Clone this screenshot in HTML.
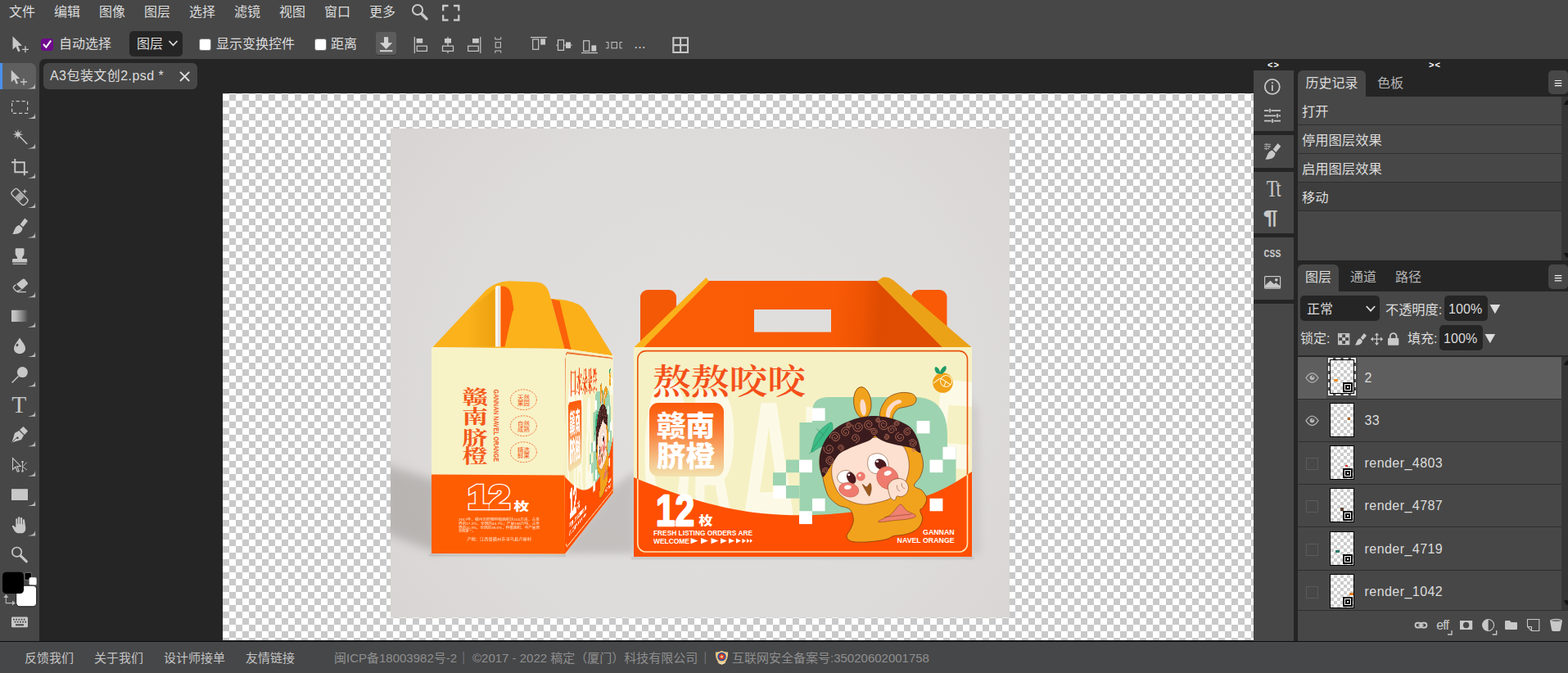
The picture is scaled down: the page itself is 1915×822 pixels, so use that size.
<!DOCTYPE html>
<html lang="zh-CN">
<head>
<meta charset="utf-8">
<title>A3包装文创2.psd</title>
<style>
html,body{margin:0;padding:0}
body{width:1915px;height:822px;overflow:hidden;background:#474747;position:relative;font-family:"Liberation Sans","Noto Sans CJK SC",sans-serif;font-size:16px;color:#dcdcdc;line-height:20px}
.a{position:absolute}
.t{position:absolute;white-space:nowrap;line-height:20px;height:20px}
svg{position:absolute;overflow:visible}
#ws{left:48px;top:72px;width:1867px;height:711px;background:#252525;border-radius:7px 0 0 0}
#canvas{left:272px;top:114px;width:1259px;height:668px;background-color:#fff;
 background-image:repeating-conic-gradient(#c9c9c9 0% 25%,#fff 0% 50%);
 background-size:16px 16px;background-position:0 1px;overflow:hidden}
.menu span{position:absolute;top:5px;line-height:20px;white-space:nowrap}
.dk{background:#252525;border-radius:5px}
.cb{position:absolute;width:15px;height:15px;border-radius:3px;background:#fff;box-sizing:border-box;border:1px solid #767676}
#footer{left:0;top:783px;width:1915px;height:39px;background:#464749;border-top:1px solid #0c0c0c;box-sizing:border-box;font-size:15px}
#footer .g{color:#8f8f8f}
#footer span{position:absolute;top:10px;line-height:20px;white-space:nowrap}
.ptab{position:absolute;height:32px;line-height:31px;background:#474747;border-radius:6px 6px 0 0;text-align:center}
.pt2{position:absolute;line-height:31px;color:#b4b4b4}
.hrow{position:absolute;left:1585px;width:322px;height:34px;background:#474747;border-bottom:1px solid #2e2e2e;line-height:37px;text-indent:5px;font-size:16.3px}
.lrow{position:absolute;left:1585px;width:322px;height:51px;background:#474747;border-bottom:1px solid #2e2e2e}
.lrow .nm{position:absolute;left:81.500px;top:16px;line-height:20px;letter-spacing:.45px;white-space:nowrap}
.th{position:absolute;left:39px;top:4px;width:30px;height:42px;box-sizing:border-box;border:1px solid #000;background-color:#fff;
 background-image:linear-gradient(45deg,#ccc 25%,transparent 25%,transparent 75%,#ccc 75%),linear-gradient(45deg,#ccc 25%,transparent 25%,transparent 75%,#ccc 75%);
 background-size:8px 8px;background-position:0 0,4px 4px}
.so{position:absolute;right:1px;bottom:1px;width:12px;height:12px;background:#000;box-sizing:border-box}
.so:before{content:"";position:absolute;left:2px;top:2px;width:8px;height:8px;border:1px solid #fff;box-sizing:border-box}
.so:after{content:"";position:absolute;left:5px;top:5px;width:2px;height:2px;background:#fff}
.mk{position:absolute;width:4px;height:3px}
.ck{position:absolute;left:10px;top:19px;width:15px;height:15px;box-sizing:border-box;border:1px solid #5a5a5a}
</style>
</head>
<body>
<!-- MENU BAR -->
<div class="a menu" style="left:0;top:0;width:1915px;height:30px">
<span style="left:11px">文件</span><span style="left:66px">编辑</span><span style="left:121px">图像</span><span style="left:176px">图层</span><span style="left:231px">选择</span><span style="left:286px">滤镜</span><span style="left:341px">视图</span><span style="left:396px">窗口</span><span style="left:451px">更多</span>
</div>
<!-- OPTIONS BAR -->
<div class="a" id="opts" style="left:0;top:30px;width:1915px;height:42px">
<div class="cb" style="left:50px;top:17px;background:#6f0a8c;border-color:#6f0a8c"></div>
<div class="t" style="left:72px;top:14px">自动选择</div>
<div class="a dk" style="left:158px;top:8px;width:65px;height:31px"></div>
<div class="t" style="left:167px;top:14px">图层</div>
<div class="cb" style="left:243px;top:17px"></div>
<div class="t" style="left:264px;top:14px">显示变换控件</div>
<div class="cb" style="left:384px;top:17px"></div>
<div class="t" style="left:404px;top:14px">距离</div>
<div class="a" style="left:459px;top:9px;width:25px;height:28px;background:#5c5c5c;border-radius:3px;box-shadow:0 1px 0 #383838"></div>
</div>
<!-- WORKSPACE -->
<div class="a" id="ws"></div>
<div class="a" style="left:53px;top:77px;width:188px;height:32px;background:#474747;border-radius:6px"></div>
<div class="t" style="left:61px;top:83px;letter-spacing:.45px">A3包装文创2.psd *</div>
<div class="a" id="canvas">
<svg id="art" width="1915" height="822" viewBox="0 0 1915 822" style="left:-272px;top:-114px">
<defs>
<radialGradient id="bg" gradientUnits="userSpaceOnUse" cx="870" cy="470" r="560"><stop offset="0" stop-color="#e2e0df"/><stop offset=".6" stop-color="#dddbd9"/><stop offset="1" stop-color="#d5d2d0"/></radialGradient>
<linearGradient id="lab" x1="0" y1="0" x2="0" y2="1"><stop offset="0" stop-color="#fc5a08"/><stop offset=".35" stop-color="#fa7a32"/><stop offset=".8" stop-color="#f5c48b"/><stop offset="1" stop-color="#f3e2ae"/></linearGradient>
<linearGradient id="back" gradientUnits="userSpaceOnUse" x1="860" y1="380" x2="1150" y2="400"><stop offset="0" stop-color="#fb5c06"/><stop offset=".55" stop-color="#f85a05"/><stop offset=".66" stop-color="#ee5403"/><stop offset=".74" stop-color="#de4b01"/><stop offset="1" stop-color="#e04c02"/></linearGradient>
<linearGradient id="rsh" gradientUnits="userSpaceOnUse" x1="570" y1="0" x2="606" y2="0"><stop offset="0" stop-color="#d98a00" stop-opacity="0"/><stop offset="1" stop-color="#d98a00" stop-opacity=".45"/></linearGradient>
<filter id="b5" x="-50%" y="-50%" width="200%" height="200%"><feGaussianBlur stdDeviation="4.5"/></filter>
<filter id="b6" x="-50%" y="-50%" width="200%" height="200%"><feGaussianBlur stdDeviation="6"/></filter>
<filter id="b8" x="-50%" y="-50%" width="200%" height="200%"><feGaussianBlur stdDeviation="9"/></filter>
<filter id="b1" x="-50%" y="-50%" width="200%" height="200%"><feGaussianBlur stdDeviation="1.2"/></filter>
<filter id="b3" x="-50%" y="-50%" width="200%" height="200%"><feGaussianBlur stdDeviation="2.5"/></filter>
<clipPath id="cimg"><rect x="477" y="157.100" width="756" height="597.200"/></clipPath>
<clipPath id="csh"><rect x="477" y="157" width="756" height="523.500"/></clipPath>
<clipPath id="cfront"><rect x="774" y="424" width="413" height="256"/></clipPath>
<clipPath id="cside"><path d="M689.6,426 L748.6,434.5 L748.6,602 L690,676.6 Z"/></clipPath>
</defs>
<g clip-path="url(#cimg)">
<rect x="477" y="157" width="757" height="598" fill="url(#bg)"/>
<!-- floor shadows -->
<g>
<path d="M536,588 L536,676 L466,650 L466,566 Z" fill="#77726f" opacity=".34" filter="url(#b6)"/>
<path d="M686,676 L748,596 L776,575 L776,676 Z" fill="#77726f" opacity=".26" filter="url(#b5)"/>
<path d="M1182,480 L1195,500 L1198,678 L1182,678 Z" fill="#8a8583" opacity=".16" filter="url(#b5)"/>
</g>
<path d="M524,677 L691,677.600 L691,679.800 L524,679 Z M771,680.500 L1189,680.500 L1189,682.800 L771,682.800 Z" fill="#6b6664" opacity=".28" filter="url(#b1)"/>
<g id="leftbox">
<path d="M528.5,424 L594,354 Q606,343.5 622,343.2 L656,344.5 Q667,346 670.5,357 L689.8,426 Z" fill="#fbb21b"/>
<path d="M565,385 L605,352 L605,423.500 L565,423.500 Z" fill="url(#rsh)"/>
<path d="M673,365 Q692,365 707,372 Q713,376 717,383 L748.6,434.5 L689.6,426 Z" fill="#fbb019"/>
<path d="M673,365 L683.500,367.500 L697.500,427.300 L689.600,426 Z" fill="#fb6209"/>
<path d="M604.800,352 Q605.200,347.600 611.500,349.600 L611.500,423.500 L605,423.500 Z" fill="#f8f4ee"/><path d="M609.300,351 V423" stroke="#c9c4be" stroke-width=".8" fill="none"/>
<path d="M611.500,349.800 Q622,348 625,362 L627.500,378 L626,381 L616.500,423.500 L611.500,423.500 Z" fill="#fb6008"/>
<path d="M527,424 L689.6,426 L690,676.6 L527,676 Z" fill="#f8f2c7"/>
<path d="M527,579.6 L689.8,580.6 L690,676.6 L527,676 Z" fill="#ff5d01"/>
<path d="M689.6,426 L748.6,434.5 L748.6,602 L690,676.6 Z" fill="#fbf6d6"/>
<g id="lfront">
<g font-family="'Noto Serif CJK SC','Noto Sans CJK SC',serif" font-weight="700" font-size="23" fill="#f4591a" text-anchor="middle" transform="translate(580,0) scale(1.380,1)">
<text x="0" y="493">赣</text><text x="0" y="517.500">南</text><text x="0" y="543">脐</text><text x="0" y="565.500">橙</text>
</g>
<text transform="translate(603.3,475.5) rotate(90)" font-family="'Liberation Sans',sans-serif" font-weight="bold" font-size="8.2" fill="#f4591a" textLength="88.500" lengthAdjust="spacingAndGlyphs">GANNAN NAVEL ORANGE</text>
<g fill="none" stroke="#f4591a" stroke-width=".8" stroke-dasharray="2.2 1.3">
<ellipse cx="639.4" cy="488.200" rx="16" ry="12.400"/><ellipse cx="639.4" cy="520.200" rx="16" ry="12.400"/><ellipse cx="639.4" cy="552.200" rx="16" ry="12.400"/>
</g>
<g font-family="'Liberation Sans','Noto Sans CJK SC',sans-serif" font-size="7.4" fill="#f4591a" text-anchor="middle">
<text x="639.4" y="487.500">天然</text><text x="639.4" y="494.800">果园</text>
<text x="639.4" y="519.500">自然</text><text x="639.4" y="526.800">成熟</text>
<text x="639.4" y="551.500">精选</text><text x="639.4" y="558.800">鲜果</text>
</g>
<g transform="translate(571.600,621.300) scale(1.120,1)" font-family="'Liberation Sans',sans-serif" font-weight="bold" font-size="41" stroke-linejoin="miter">
<text fill="#fff" stroke="#fff" stroke-width="4.600">12</text><text fill="#ff5d01" stroke="#ff5d01" stroke-width="2">12</text></g>
<text transform="translate(627.300,623.300) scale(1.350,1)" font-family="'Liberation Sans','Noto Sans CJK SC',sans-serif" font-weight="900" font-size="14" fill="#fff">枚</text>
<g font-family="'Liberation Sans','Noto Sans CJK SC',sans-serif" font-size="4.1" fill="#fff" opacity=".9">
<text x="560" y="636.200" textLength="99" lengthAdjust="spacingAndGlyphs">2017年，赣州市脐橙种植面积达155万亩，占世</text>
<text x="560" y="640.900" textLength="99" lengthAdjust="spacingAndGlyphs">界的17.2%，全国的44.7%；产量108万吨，占世</text>
<text x="560" y="645.600" textLength="99" lengthAdjust="spacingAndGlyphs">界的11.3%，全国的39.6%，种植面积、年产量居</text>
<text x="560" y="650.300">全国第一。</text>
<text x="570.400" y="660.300" textLength="78.500" lengthAdjust="spacingAndGlyphs" font-size="4.6">产地：江西省赣州市寻乌县卢屋村</text>
</g>
</g>
</g>
<g id="rightbox">
<rect x="782" y="354" width="44" height="72" rx="9" fill="#f45906"/>
<rect x="1113" y="354" width="43.5" height="72" rx="9" fill="#f85a06"/>
<path d="M864,343 L1071,343 L1151,424 L786,424 Z" fill="url(#back)"/>
<rect x="921" y="378" width="94" height="27.6" fill="#e0dedd"/>
<path d="M862.5,339 L866,343.5 L786,424.5 L774,424.5 Z" fill="#fbb21a"/>
<path d="M1071,343.500 L1078,338.700 Q1085,337.600 1092,343 L1187,424.500 L1151,424.500 Z" fill="#eca217"/>
<g id="fd" clip-path="url(#cfront)">
<rect x="774" y="424" width="413" height="256" fill="#f6f1c4"/>
<!-- watermark -->
<g fill="#fcfae7" font-family="'Liberation Sans',sans-serif" font-weight="bold" font-size="270">
<text transform="translate(784.500,652) scale(.290,1)">O</text>
<text transform="translate(844,663) scale(.290,1)">R</text>
<text transform="translate(899,678) scale(.410,1)">A</text>
<text transform="translate(978,683) scale(.360,1)">N</text>
<text transform="translate(1050,675) scale(.370,1)">G</text>
<text transform="translate(1128,648) rotate(5) scale(.300,1)">E</text>
</g>
<!-- green -->
<path d="M976.500,645 L976.500,516 L992,516 L992,503 Q992,485 1012,485 L1118,485 Q1157,486 1157,532 L1157,546 L1167.500,546 L1167.500,645 Z" fill="#9dd3b0"/>
<g fill="#9dd3b0">
<rect x="960" y="561.5" width="16.500" height="15.7"/><rect x="944" y="577.2" width="16" height="15.7"/><rect x="960" y="593" width="16.500" height="15.7"/>
</g>
<g fill="#f6f1c4">

</g>
<g fill="#fff">
<rect x="992" y="498.5" width="15.6" height="15.4"/><rect x="1119.6" y="514" width="15.9" height="15.4"/><rect x="1151.5" y="545.8" width="15.9" height="15.4"/><rect x="976" y="561.6" width="15.9" height="15.5"/><rect x="1135.5" y="561.6" width="15.9" height="15.5"/><rect x="944.2" y="593.2" width="15.6" height="15.5"/><rect x="992" y="608.8" width="15.6" height="15.5"/><rect x="1135.5" y="608.8" width="15.9" height="15.5"/><rect x="976" y="624.5" width="15.9" height="15.6"/>
</g>
<!-- frame orange -->
<rect x="778.8" y="428.6" width="402.7" height="245.4" rx="10" fill="none" stroke="#ea520d" stroke-width="1.6"/>
<!-- wave -->
<path id="wave" d="M774,583 C800,594 820,601 840,607.5 C870,617 900,624 930,627 C955,629.5 975,629.5 995,629 C1040,627.5 1090,619 1133,605 C1150,599.5 1170,588 1187,576 L1187,680 L774,680 Z" fill="#ff4f02"/>
<clipPath id="cwave"><path d="M774,583 C800,594 820,601 840,607.5 C870,617 900,624 930,627 C955,629.5 975,629.5 995,629 C1040,627.5 1090,619 1133,605 C1150,599.5 1170,588 1187,576 L1187,680 L774,680 Z"/></clipPath>
<rect x="778.8" y="428.6" width="402.7" height="245.4" rx="10" fill="none" stroke="#fde7b5" stroke-width="1.6" clip-path="url(#cwave)"/>
<g fill="#fff"><rect x="976" y="624.5" width="15.9" height="15.6"/><rect x="1135.5" y="608.8" width="15.9" height="15.5"/></g>
<!-- label -->
<rect x="793" y="492" width="91" height="90" rx="11" fill="url(#lab)"/>
<g font-family="'Liberation Sans','Noto Sans CJK SC',sans-serif" font-weight="900" font-size="35" fill="#fff">
<text x="802" y="533" textLength="71" lengthAdjust="spacingAndGlyphs">赣南</text>
<text x="802" y="570" textLength="71" lengthAdjust="spacingAndGlyphs">脐橙</text>
</g>
<!-- 12 -->
<text transform="translate(801,642) scale(.80,1)" font-family="'Liberation Sans',sans-serif" font-weight="bold" font-size="53" fill="#fff" stroke="#fff" stroke-width="2.4" stroke-linejoin="round">12</text>
<text transform="translate(853.300,641.300) scale(1.180,1)" font-family="'Liberation Sans','Noto Sans CJK SC',sans-serif" font-weight="900" font-size="14.500" fill="#fff">枚</text>
<g font-family="'Liberation Sans','Noto Sans CJK SC',sans-serif" font-weight="bold" font-size="9.6" fill="#fff">
<text x="798" y="654.3" textLength="121" lengthAdjust="spacingAndGlyphs">FRESH LISTING ORDERS ARE</text>
<text x="798" y="664.3" textLength="44" lengthAdjust="spacingAndGlyphs">WELCOME</text>
<text x="1165.6" y="653" text-anchor="end" textLength="38.5" lengthAdjust="spacingAndGlyphs">GANNAN</text>
<text x="1165.6" y="663.3" text-anchor="end" textLength="70" lengthAdjust="spacingAndGlyphs">NAVEL ORANGE</text>
</g>
<path d="M843.5,657 l9,3.6 l-9,3.6z M856,657 l9,3.6 l-9,3.6z M868.5,657 l9,3.6 l-9,3.6z M880,657.2 l8,3.4 l-8,3.4z M890,657.4 l7,3.2 l-7,3.2z M899,657.6 l6,3 l-6,3z M906.5,657.8 l4.5,2.8 l-4.5,2.8z M912,658 l3.5,2.6 l-3.5,2.6z M916,658.2 l3,2.4 l-3,2.4z" fill="#fff"/>
<!-- character -->
<g id="char">
<g stroke="#6b3410" stroke-width=".7" fill="#f2a31d">
<ellipse cx="1053.3" cy="491.7" rx="10.7" ry="19.2" transform="rotate(-6 1053.3 491.7)" />
<path d="M1075.5,510.9 C1073.4,508.3 1074.7,502.4 1076.3,498.1 C1077.9,493.9 1081.4,488.4 1085.2,485.3 C1089.1,482.3 1094.6,480.5 1099.3,479.7 C1104.0,478.9 1110.1,479.6 1113.4,480.7 C1116.6,481.9 1118.5,484.5 1119.0,486.6 C1119.5,488.7 1118.4,491.8 1116.4,493.5 C1114.4,495.2 1110.2,495.9 1107.0,496.8 C1103.7,497.8 1099.4,497.7 1096.7,499.4 C1094.1,501.1 1092.1,504.7 1090.9,507.1 C1089.6,509.4 1091.6,512.8 1089.1,513.5 C1086.5,514.1 1077.7,513.5 1075.5,510.9 Z"/>
<path d="M1004.7,582.5 C1003.7,578.0 1000.7,573.1 1000.9,567.1 C1001.1,561.2 1000.0,554.3 1006.0,546.7 C1012.0,539.0 1025.2,526.2 1036.7,521.1 C1048.2,516.0 1062.2,513.9 1075.0,516.0 C1087.8,518.1 1105.0,527.5 1113.4,533.9 C1121.7,540.3 1122.5,548.4 1124.9,554.3 C1127.2,560.3 1127.6,565.0 1127.4,569.7 C1127.2,574.4 1125.4,578.5 1123.6,582.5 C1121.7,586.4 1116.0,590.4 1116.4,593.2 C1116.8,596.0 1123.6,596.4 1126.1,599.1 C1128.7,601.8 1131.5,605.9 1131.8,609.3 C1132.0,612.7 1128.8,617.2 1127.4,619.5 C1126.0,621.9 1123.7,621.0 1123.6,623.4 C1123.5,625.7 1126.9,630.2 1126.6,633.6 C1126.4,637.0 1124.5,641.0 1122.3,643.8 C1120.1,646.6 1116.8,648.6 1113.4,650.2 C1109.9,651.8 1105.5,652.8 1101.9,653.5 C1098.2,654.2 1094.8,653.7 1091.6,654.5 C1088.4,655.4 1086.7,657.5 1082.7,658.6 C1078.6,659.7 1072.9,660.6 1067.3,661.2 C1061.8,661.8 1054.4,662.3 1049.5,662.2 C1044.6,662.1 1040.5,661.7 1038.0,660.4 C1035.4,659.1 1034.0,656.9 1034.1,654.5 C1034.2,652.2 1037.4,649.6 1038.7,646.4 C1040.1,643.1 1042.4,638.9 1042.3,634.9 C1042.2,630.8 1041.0,625.1 1038.0,622.1 C1034.9,619.1 1028.2,619.5 1023.9,617.0 C1019.6,614.4 1015.2,610.6 1012.4,606.7 C1009.6,602.9 1008.6,598.0 1007.3,594.0 C1006.0,589.9 1005.8,586.9 1004.7,582.5 Z"/>
</g>
<ellipse cx="1054.1" cy="497.6" rx="3.6" ry="10.2" transform="rotate(-6 1054.1 497.6)" fill="#fbdccf"/>
<path d="M1082.2,508.3 C1081.7,506.4 1082.4,501.1 1084.0,498.1 C1085.5,495.1 1089.1,492.1 1091.6,490.4 C1094.2,488.8 1097.8,488.2 1099.3,488.4 C1100.8,488.6 1101.6,490.5 1100.6,491.7 C1099.5,492.9 1095.0,493.6 1092.9,495.6 C1090.8,497.5 1088.9,500.9 1087.8,503.2 C1086.7,505.6 1087.5,508.8 1086.5,509.6 C1085.6,510.5 1082.6,510.3 1082.2,508.3 Z" fill="#fbdccf"/>
<path d="M1017.5,564.6 C1015.7,568.8 1015.6,573.1 1015.7,577.3 C1015.8,581.6 1016.7,585.8 1018.3,590.1 C1019.9,594.5 1021.9,599.8 1025.2,603.4 C1028.5,607.1 1033.1,610.0 1038.0,612.1 C1042.9,614.2 1048.8,615.9 1054.6,616.2 C1060.3,616.5 1066.9,614.9 1072.5,613.6 C1078.0,612.4 1083.1,611.2 1087.8,608.5 C1092.5,605.9 1097.2,602.1 1100.6,597.8 C1104.0,593.5 1106.6,587.6 1108.2,582.5 C1109.9,577.3 1110.5,572.2 1110.3,567.1 C1110.1,562.0 1109.0,556.0 1107.0,551.8 C1104.9,547.5 1103.8,544.5 1098.0,541.6 C1092.3,538.6 1081.4,533.9 1072.5,533.9 C1063.5,533.9 1052.0,538.6 1044.3,541.6 C1036.7,544.5 1030.9,548.0 1026.5,551.8 C1022.0,555.6 1019.3,560.3 1017.5,564.6 Z" fill="#fde0cf" stroke="#6b3410" stroke-width=".6"/>
<path d="M991.2,552.3 C990.2,551.7 991.9,547.2 992.7,544.1 C993.5,541.1 994.2,537.1 995.8,533.9 C997.4,530.7 999.0,527.9 1002.2,525.0 C1005.4,522.0 1012.5,516.0 1015.0,516.0 C1017.4,516.0 1016.9,522.0 1016.7,525.0 C1016.6,527.9 1015.6,531.0 1014.2,533.9 C1012.7,536.8 1010.7,539.7 1008.1,542.1 C1005.4,544.4 1001.2,546.3 998.3,548.0 C995.5,549.7 992.1,552.9 991.2,552.3 Z" fill="#3dbb86" stroke="#1f8a5a" stroke-width=".5"/>
<path d="M988.6,554.3 L1012.4,521.1 M997.1,523.7 L1006.0,531.3" stroke="#1f8a5a" stroke-width=".6" fill="none"/>
<path d="M1004.7,582.5 C1003.0,581.2 1001.3,572.2 1000.9,567.1 C1000.5,562.0 1000.9,556.9 1002.2,551.8 C1003.5,546.7 1005.4,541.4 1008.6,536.5 C1011.8,531.6 1016.2,526.2 1021.3,522.4 C1026.5,518.6 1033.3,515.7 1039.2,513.5 C1045.2,511.2 1051.6,509.7 1057.1,508.8 C1062.7,508.0 1066.5,507.8 1072.5,508.3 C1078.4,508.9 1086.5,510.0 1092.9,512.2 C1099.3,514.3 1106.3,517.5 1110.8,521.1 C1115.3,524.7 1117.6,529.6 1119.7,533.9 C1121.9,538.2 1122.9,543.5 1123.6,546.7 C1124.2,549.9 1125.3,553.0 1123.6,553.1 C1121.9,553.2 1117.6,548.7 1113.4,547.2 C1109.1,545.7 1103.1,545.3 1098.0,544.1 C1092.9,543.0 1086.9,541.8 1082.7,540.3 C1078.4,538.8 1074.8,536.5 1072.5,535.2 C1070.1,533.9 1070.3,532.2 1068.6,532.6 C1066.9,533.0 1065.4,536.0 1062.2,537.7 C1059.0,539.4 1053.7,541.1 1049.5,542.8 C1045.2,544.5 1040.7,546.0 1036.7,548.0 C1032.6,549.9 1028.4,551.6 1025.2,554.3 C1022.0,557.1 1019.9,561.2 1017.5,564.6 C1015.2,568.0 1013.2,571.8 1011.1,574.8 C1009.0,577.8 1006.4,583.7 1004.7,582.5 Z" fill="#3b1c1e"/>
<path d="M1006.0,546.1 L1006.0,548.5 L1006.7,550.6 L1008.1,552.3 L1010.0,553.3 L1012.0,553.7 L1014.0,553.3 L1015.6,552.2 L1016.8,550.8 L1017.3,549.0 L1017.2,547.3 L1016.5,545.7 L1015.3,544.6 L1013.9,544.0 L1012.4,543.9 L1011.1,544.3 L1010.0,545.1 L1009.3,546.2 L1009.1,547.4 L1009.3,548.6 L1009.9,549.5 L1010.7,550.2 L1011.6,550.5 L1012.5,550.4 L1013.3,550.0 L1013.8,549.4 L1014.1,548.8 L1014.1,548.1 L1013.9,547.6 L1013.5,547.2 M1013.5,535.0 L1013.7,532.7 L1014.7,530.6 L1016.3,529.0 L1018.2,528.1 L1020.4,528.0 L1022.4,528.6 L1024.0,529.9 L1025.0,531.5 L1025.4,533.4 L1025.0,535.3 L1024.1,536.9 L1022.8,538.0 L1021.1,538.5 L1019.5,538.4 L1018.0,537.8 L1016.9,536.7 L1016.2,535.4 L1016.1,533.9 L1016.5,532.6 L1017.3,531.5 L1018.3,530.8 L1019.6,530.5 L1020.7,530.7 L1021.7,531.3 L1022.4,532.1 L1022.8,533.1 L1022.7,534.1 L1022.3,534.9 L1021.7,535.6 L1021.0,535.9 L1020.2,536.0 L1019.5,535.7 L1019.0,535.3 L1018.7,534.8 L1018.6,534.2 L1018.7,533.7 M1038.0,524.2 L1036.4,522.7 L1034.5,521.9 L1032.4,521.8 L1030.6,522.5 L1029.1,523.7 L1028.1,525.3 L1027.8,527.1 L1028.1,528.8 L1029.0,530.3 L1030.3,531.4 L1031.8,531.9 L1033.4,531.8 L1034.8,531.2 L1035.8,530.2 L1036.5,529.0 L1036.6,527.6 L1036.3,526.4 L1035.5,525.3 L1034.5,524.7 L1033.4,524.4 L1032.3,524.5 L1031.4,525.0 L1030.7,525.8 L1030.4,526.7 L1030.4,527.6 L1030.7,528.3 L1031.3,528.9 L1031.9,529.3 L1032.6,529.3 L1033.2,529.1 L1033.7,528.8 L1033.9,528.3 L1034.0,527.9 M1044.9,540.8 L1046.8,540.1 L1048.2,538.8 L1049.1,537.2 L1049.3,535.4 L1048.9,533.6 L1048.0,532.2 L1046.6,531.3 L1045.1,530.9 L1043.6,531.0 L1042.2,531.7 L1041.3,532.8 L1040.8,534.0 L1040.7,535.4 L1041.2,536.5 L1042.0,537.5 L1043.0,538.0 L1044.1,538.2 L1045.1,537.9 L1045.9,537.3 L1046.5,536.6 L1046.7,535.7 L1046.5,534.9 L1046.2,534.2 L1045.6,533.7 L1045.0,533.5 L1044.3,533.6 L1043.8,533.8 L1043.5,534.2 L1043.4,534.6 M1041.9,519.1 L1041.7,521.4 L1042.4,523.6 L1043.7,525.4 L1045.6,526.5 L1047.7,526.9 L1049.7,526.6 L1051.4,525.6 L1052.6,524.1 L1053.2,522.3 L1053.1,520.5 L1052.4,518.9 L1051.3,517.6 L1049.8,516.9 L1048.2,516.8 L1046.7,517.2 L1045.6,518.1 L1044.8,519.3 L1044.6,520.6 L1044.8,521.9 L1045.4,522.9 L1046.3,523.6 L1047.3,524.0 L1048.4,523.9 L1049.3,523.5 L1050.0,522.9 L1050.3,522.1 L1050.3,521.3 L1050.1,520.5 L1049.6,520.0 L1049.1,519.7 L1048.5,519.7 L1048.0,519.8 M1064.5,523.5 L1062.5,524.3 L1060.4,524.4 L1058.5,523.7 L1056.9,522.4 L1056.0,520.7 L1055.7,518.8 L1056.1,517.0 L1057.1,515.5 L1058.5,514.4 L1060.1,514.0 L1061.8,514.1 L1063.2,514.8 L1064.2,515.9 L1064.8,517.3 L1064.9,518.7 L1064.4,520.0 L1063.6,521.0 L1062.5,521.7 L1061.3,521.9 L1060.1,521.6 L1059.2,521.0 L1058.6,520.2 L1058.3,519.2 L1058.4,518.2 L1058.8,517.4 L1059.5,516.9 L1060.2,516.6 L1060.9,516.6 L1061.6,516.9 L1062.0,517.3 L1062.3,517.8 L1062.3,518.4 L1062.2,518.8 M1062.8,526.8 L1063.4,525.4 L1064.4,524.2 L1065.8,523.5 L1067.3,523.3 L1068.7,523.6 L1069.9,524.4 L1070.7,525.5 L1071.1,526.8 L1071.0,528.2 L1070.4,529.3 L1069.6,530.2 L1068.5,530.7 L1067.3,530.8 L1066.2,530.5 L1065.3,529.8 L1064.7,528.9 L1064.5,527.9 L1064.6,526.9 L1065.1,526.1 L1065.8,525.5 L1066.6,525.2 L1067.5,525.2 L1068.2,525.4 L1068.8,525.9 L1069.2,526.6 L1069.3,527.3 L1069.1,527.9 L1068.8,528.5 L1068.3,528.8 L1067.8,529.0 L1067.2,528.9 L1066.8,528.7 L1066.5,528.4 L1066.3,528.0 L1066.3,527.6 L1066.5,527.3 M1085.0,521.2 L1083.6,523.0 L1081.7,524.2 L1079.6,524.7 L1077.4,524.4 L1075.6,523.4 L1074.2,521.9 L1073.5,520.1 L1073.5,518.2 L1074.1,516.4 L1075.2,515.0 L1076.7,514.1 L1078.4,513.8 L1080.0,514.1 L1081.4,514.9 L1082.4,516.1 L1082.9,517.5 L1082.8,518.9 L1082.3,520.2 L1081.4,521.2 L1080.3,521.8 L1079.1,521.9 L1078.0,521.6 L1077.0,521.0 L1076.4,520.2 L1076.2,519.2 L1076.3,518.3 L1076.7,517.5 L1077.3,516.9 L1078.0,516.6 L1078.8,516.6 L1079.4,516.8 L1079.9,517.3 L1080.1,517.8 L1080.2,518.3 M1094.6,526.0 L1094.5,524.1 L1093.7,522.4 L1092.4,521.0 L1090.8,520.2 L1089.1,520.1 L1087.5,520.5 L1086.1,521.4 L1085.2,522.8 L1084.9,524.2 L1085.0,525.7 L1085.7,527.0 L1086.7,527.9 L1087.9,528.4 L1089.1,528.5 L1090.3,528.1 L1091.2,527.4 L1091.8,526.4 L1092.0,525.4 L1091.8,524.4 L1091.3,523.6 L1090.6,523.0 L1089.8,522.7 L1089.0,522.8 L1088.3,523.1 L1087.8,523.6 L1087.5,524.2 L1087.5,524.8 L1087.7,525.3 L1088.0,525.7 L1088.4,525.9 M1098.1,527.9 L1096.2,528.8 L1094.7,530.3 L1093.9,532.1 L1093.8,534.1 L1094.3,535.9 L1095.4,537.4 L1096.9,538.4 L1098.6,538.8 L1100.3,538.5 L1101.7,537.8 L1102.8,536.6 L1103.4,535.2 L1103.4,533.7 L1103.0,532.4 L1102.1,531.3 L1101.0,530.6 L1099.8,530.4 L1098.6,530.6 L1097.6,531.2 L1096.9,532.0 L1096.5,533.0 L1096.5,534.0 L1096.9,534.9 L1097.5,535.6 L1098.3,535.9 L1099.0,536.0 L1099.8,535.8 L1100.3,535.4 L1100.6,534.9 L1100.8,534.3 L1100.7,533.8 L1100.4,533.4 M1112.7,525.1 L1111.5,523.7 L1110.0,522.9 L1108.3,522.8 L1106.6,523.2 L1105.3,524.1 L1104.4,525.4 L1104.0,526.9 L1104.2,528.4 L1104.8,529.7 L1105.9,530.6 L1107.1,531.1 L1108.5,531.2 L1109.7,530.7 L1110.6,530.0 L1111.2,528.9 L1111.4,527.8 L1111.2,526.7 L1110.6,525.8 L1109.8,525.1 L1108.9,524.9 L1107.9,524.9 L1107.1,525.3 L1106.5,525.9 L1106.2,526.7 L1106.1,527.5 L1106.4,528.2 L1106.8,528.7 L1107.4,529.0 L1108.0,529.1 L1108.5,529.0 L1109.0,528.7 L1109.2,528.3 L1109.3,527.9 L1109.3,527.5 M1110.1,539.2 L1111.3,537.9 L1112.9,537.0 L1114.6,536.8 L1116.2,537.2 L1117.5,538.1 L1118.5,539.4 L1118.9,540.9 L1118.7,542.4 L1118.0,543.7 L1117.0,544.7 L1115.7,545.2 L1114.4,545.2 L1113.2,544.8 L1112.2,544.0 L1111.6,543.0 L1111.5,541.8 L1111.7,540.7 L1112.3,539.8 L1113.1,539.2 L1114.1,538.9 L1115.0,539.0 L1115.8,539.4 L1116.4,540.0 L1116.7,540.8 L1116.7,541.6 L1116.5,542.3 L1116.0,542.8 L1115.5,543.1 L1114.8,543.2 L1114.3,543.0 L1113.9,542.7 L1113.6,542.3 L1113.5,541.9 L1113.6,541.5 M1018.3,565.2 L1016.8,566.5 L1015.0,567.2 L1013.1,567.2 L1011.4,566.6 L1010.1,565.5 L1009.2,563.9 L1008.9,562.3 L1009.3,560.6 L1010.1,559.3 L1011.3,558.3 L1012.8,557.9 L1014.3,557.9 L1015.6,558.5 L1016.6,559.5 L1017.2,560.7 L1017.3,562.0 L1017.0,563.2 L1016.3,564.2 L1015.3,564.8 L1014.2,565.1 L1013.1,565.0 L1012.2,564.5 L1011.5,563.7 L1011.2,562.8 L1011.2,561.9 L1011.5,561.1 L1012.0,560.5 L1012.7,560.1 L1013.4,560.0 L1014.1,560.2 L1014.6,560.6 L1015.0,561.1 L1015.1,561.6 L1015.0,562.1 L1014.8,562.5 L1014.5,562.8 M1026.3,550.8 L1027.6,550.5 L1028.8,549.8 L1029.7,548.7 L1030.1,547.4 L1030.0,546.2 L1029.5,545.0 L1028.7,544.1 L1027.6,543.6 L1026.5,543.5 L1025.4,543.8 L1024.6,544.4 L1024.0,545.2 L1023.7,546.2 L1023.8,547.1 L1024.2,548.0 L1024.9,548.6 L1025.7,548.9 L1026.5,548.9 L1027.2,548.7 L1027.8,548.2 L1028.2,547.6 L1028.3,546.9 L1028.2,546.3 L1027.8,545.8 L1027.4,545.5 L1026.9,545.3 L1026.4,545.4 L1026.0,545.5 L1025.7,545.9 L1025.5,546.2 L1025.5,546.6 L1025.7,546.9 M1074.3,511.0 L1073.4,510.6 L1072.3,510.5 L1071.3,510.8 L1070.6,511.4 L1070.0,512.2 L1069.8,513.2 L1070.0,514.1 L1070.4,514.9 L1071.0,515.4 L1071.8,515.7 L1072.7,515.7 L1073.4,515.5 L1074.0,515.0 L1074.4,514.3 L1074.5,513.6 L1074.3,512.9 L1074.0,512.3 L1073.5,511.9 L1072.9,511.8 L1072.3,511.8 L1071.7,512.0 L1071.3,512.4 L1071.1,512.9 L1071.1,513.4 L1071.2,513.9 L1071.5,514.2 L1071.8,514.5 L1072.2,514.5 L1072.6,514.5 L1072.9,514.3 L1073.1,514.0 L1073.2,513.7 L1073.2,513.4 L1073.1,513.2 L1072.9,513.1 M1114.0,550.9 L1114.7,551.4 L1115.6,551.6 L1116.4,551.5 L1117.1,551.2 L1117.7,550.6 L1118.0,549.9 L1118.0,549.1 L1117.8,548.4 L1117.3,547.9 L1116.7,547.5 L1116.1,547.4 L1115.5,547.5 L1114.9,547.8 L1114.5,548.3 L1114.4,548.8 L1114.4,549.4 L1114.6,549.9 L1114.9,550.3 L1115.4,550.5 L1115.8,550.5 L1116.3,550.4 L1116.6,550.1 L1116.8,549.8 L1116.9,549.4 L1116.9,549.1 L1116.7,548.8 L1116.5,548.6 L1116.2,548.5 L1115.9,548.5 L1115.7,548.6 L1115.5,548.8 L1115.5,549.0 M1005.1,577.0 L1004.7,575.7 L1004.7,574.3 L1005.2,573.0 L1006.1,572.0 L1007.3,571.5 L1008.5,571.3 L1009.7,571.6 L1010.7,572.3 L1011.3,573.3 L1011.6,574.3 L1011.5,575.4 L1011.0,576.3 L1010.2,577.0 L1009.3,577.3 L1008.4,577.3 L1007.6,577.0 L1006.9,576.5 L1006.5,575.7 L1006.4,575.0 L1006.6,574.2 L1007.0,573.6 L1007.6,573.2 L1008.2,573.1 L1008.8,573.2 L1009.3,573.4 L1009.6,573.9 L1009.8,574.3 L1009.8,574.8 L1009.6,575.2 L1009.3,575.5 L1009.0,575.6 L1008.7,575.6 M1081.2,530.6 L1082.4,530.4 L1083.6,530.6 L1084.7,531.2 L1085.4,532.1 L1085.8,533.2 L1085.8,534.3 L1085.3,535.3 L1084.6,536.1 L1083.7,536.6 L1082.7,536.7 L1081.8,536.4 L1081.0,535.9 L1080.5,535.1 L1080.2,534.3 L1080.3,533.4 L1080.7,532.7 L1081.3,532.1 L1082.1,531.8 L1082.8,531.8 L1083.5,532.1 L1084.0,532.5 L1084.3,533.1 L1084.4,533.8 L1084.3,534.3 L1084.0,534.8 L1083.5,535.2 L1083.0,535.3 L1082.5,535.2 L1082.1,535.0 L1081.8,534.7 L1081.6,534.3 L1081.7,533.9 L1081.8,533.6 L1082.0,533.3 L1082.3,533.2 L1082.6,533.2 M1040.2,518.3 L1040.0,519.6 L1039.4,520.6 L1038.5,521.4 L1037.4,521.7 L1036.3,521.7 L1035.2,521.3 L1034.4,520.6 L1034.0,519.7 L1033.8,518.7 L1034.0,517.7 L1034.5,516.9 L1035.3,516.3 L1036.2,516.1 L1037.0,516.1 L1037.8,516.5 L1038.4,517.0 L1038.8,517.8 L1038.8,518.5 L1038.6,519.2 L1038.2,519.8 L1037.6,520.2 L1037.0,520.4 L1036.4,520.3 L1035.8,520.0 L1035.5,519.6 L1035.3,519.1 L1035.2,518.6 L1035.4,518.1 L1035.7,517.7 L1036.1,517.5 L1036.5,517.5 L1036.9,517.5 L1037.2,517.7 L1037.4,518.0 L1037.4,518.3 L1037.4,518.6 M1093.8,520.5 L1092.9,519.6 L1092.3,518.6 L1092.1,517.4 L1092.4,516.2 L1093.0,515.3 L1093.9,514.6 L1094.9,514.3 L1096.0,514.4 L1096.9,514.8 L1097.6,515.5 L1098.0,516.4 L1098.0,517.3 L1097.8,518.2 L1097.2,518.9 L1096.5,519.3 L1095.8,519.5 L1095.0,519.4 L1094.3,519.0 L1093.9,518.5 L1093.6,517.8 L1093.7,517.2 L1093.9,516.6 L1094.3,516.1 L1094.8,515.9 L1095.3,515.8 L1095.8,515.9 L1096.2,516.2 L1096.5,516.6 L1096.6,517.0 L1096.5,517.4 L1096.3,517.7 L1096.1,517.9 L1095.8,518.0 L1095.5,518.0" fill="none" stroke="#c9785e" stroke-width=".8" stroke-linejoin="round"/>
<ellipse cx="1032.1" cy="582.5" rx="9.7" ry="7.9" transform="rotate(-15 1032.1 582.5)" fill="#fff" stroke="#6b3410" stroke-width=".5"/>
<ellipse cx="1039.7" cy="583.7" rx="5.1" ry="7.7" transform="rotate(-28 1039.7 583.7)" fill="#4a1a1e"/>
<path d="M1059.7,565.8 C1059.7,562.9 1060.1,558.9 1062.2,556.9 C1064.4,554.9 1069.3,553.6 1072.5,553.8 C1075.7,554.0 1079.3,555.8 1081.4,558.2 C1083.5,560.6 1085.5,565.4 1085.2,568.4 C1085.0,571.4 1082.7,574.4 1080.1,576.1 C1077.6,577.8 1072.9,578.8 1069.9,578.6 C1066.9,578.4 1063.9,576.9 1062.2,574.8 C1060.5,572.7 1059.7,568.8 1059.7,565.8 Z" fill="#fff" stroke="#6b3410" stroke-width=".5"/>
<ellipse cx="1075.5" cy="567.1" rx="7.7" ry="5.9" transform="rotate(35 1075.5 567.1)" fill="#4a1a1e"/>
<ellipse cx="1036.7" cy="579.9" rx="1.5" ry="1.3" fill="#fff"/>
<ellipse cx="1071.4" cy="563.5" rx="1.8" ry="1.3" fill="#fff"/>
<ellipse cx="1036.7" cy="598.3" rx="12.3" ry="8.7" transform="rotate(12 1036.7 598.3)" fill="#ee7b6e" stroke="#b5503f" stroke-width=".4"/>
<ellipse cx="1084.0" cy="583.7" rx="12.8" ry="14.3" transform="rotate(-35 1084.0 583.7)" fill="#ee7b6e" stroke="#b5503f" stroke-width=".4"/>
<ellipse cx="1035.4" cy="595.2" rx="4.3" ry="2.6" transform="rotate(-5 1035.4 595.2)" fill="#fff"/>
<ellipse cx="1084.2" cy="577.9" rx="4.6" ry="2.8" transform="rotate(-20 1084.2 577.9)" fill="#fff"/>
<ellipse cx="1051.2" cy="581.9" rx="5.6" ry="5.6" fill="#ee7b6e"/>
<ellipse cx="1050.0" cy="580.4" rx="1.5" ry="1.5" fill="#fff"/>
<path d="M1053.3,591.4 C1053.5,590.7 1056.8,594.9 1058.4,594.7 C1060.0,594.5 1061.8,589.8 1062.7,590.1 C1063.7,590.4 1064.3,594.2 1064.3,596.5 C1064.3,598.9 1063.3,602.7 1062.7,604.2 C1062.2,605.7 1061.9,606.3 1061.0,605.5 C1060.0,604.6 1058.4,601.4 1057.1,599.1 C1055.8,596.7 1053.1,592.1 1053.3,591.4 Z" fill="#9a5a1e" stroke="#5a2e0c" stroke-width=".4"/>
<path d="M1085.2,600.4 C1084.7,597.8 1083.9,595.0 1084.7,592.7 C1085.6,590.3 1087.9,587.7 1090.4,586.3 C1092.8,584.9 1096.7,584.2 1099.3,584.5 C1101.9,584.8 1104.5,586.3 1106.2,588.1 C1107.9,589.9 1109.4,592.8 1109.5,595.2 C1109.6,597.7 1108.5,601.0 1107.0,602.9 C1105.5,604.8 1102.5,606.2 1100.6,606.7 C1098.7,607.3 1096.7,605.3 1095.5,606.0 C1094.2,606.7 1094.2,610.7 1092.9,611.1 C1091.6,611.4 1089.1,609.8 1087.8,608.0 C1086.5,606.2 1085.8,602.9 1085.2,600.4 Z" fill="#fde0cf" stroke="#6b3410" stroke-width=".6"/>
<path d="M1095.5,592.7 Q1095.0,599.1 1099.3,599.8 M1101.1,590.1 Q1101.1,596.5 1105.2,596.5" fill="none" stroke="#6b3410" stroke-width=".5"/>
<path d="M1072.5,637.4 C1071.6,636.2 1083.3,632.0 1087.8,628.5 C1092.3,624.9 1096.1,617.1 1099.3,616.2 C1102.5,615.3 1103.8,621.1 1107.0,623.4 C1110.2,625.6 1117.8,628.0 1118.5,629.7 C1119.1,631.4 1115.1,632.6 1110.8,633.6 C1106.5,634.6 1099.3,635.0 1092.9,635.6 C1086.5,636.3 1073.3,638.6 1072.5,637.4 Z" fill="#f08170" stroke="#6b3410" stroke-width=".5"/>
<path d="M1080.1,631.5 L1113.4,628.0" stroke="#6b3410" stroke-width=".5" fill="none"/>
</g>
<!-- orange icon -->
<g>
<circle cx="1151.500" cy="467.500" r="12.300" fill="#f0a117"/>
<path d="M1144,456 C1141,452 1141,449 1143,448 C1146,449 1148,452 1148,455 C1149,451 1152,447 1155,447 C1157,450 1155,454 1150,457 Z" fill="#1f9a68"/>
<circle cx="1155.500" cy="465.500" r="7" fill="none" stroke="#fdf3cf" stroke-width="1.100"/>
<path d="M1149,462 L1161,470 M1155,466 L1153,472 M1140,468 C1144,466 1146,462 1149,462" fill="none" stroke="#fdf3cf" stroke-width="1.100"/>
</g>
</g>
<!-- title -->
<text x="797" y="481" font-family="'Noto Serif CJK SC','Noto Sans CJK SC',serif" font-weight="600" font-size="42" fill="#f4501a" textLength="187" lengthAdjust="spacingAndGlyphs">熬熬咬咬</text>
</g>
</g>
</svg>
<svg id="side" width="413" height="256" viewBox="774 424 413 256" style="left:0;top:0;transform-origin:0 0;transform:matrix3d(0.718885,0.407943,0,0.00120862, 0.012708,0.993907,0,0.00002666, 0,0,1,0, 417.6000,312.0000,0,1)"><use href="#fd"/><text x="805" y="482" font-family="'Noto Serif CJK SC','Noto Sans CJK SC',serif" font-weight="700" font-size="41" fill="#f4501a" textLength="205" lengthAdjust="spacingAndGlyphs">口水朵朵跌</text></svg>
</div>
<!-- LEFT TOOLBAR -->
<div class="a" id="tools" style="left:0;top:72px;width:48px;height:711px;background:#474747"></div>
<div class="a" style="left:0;top:77px;width:44px;height:32px;background:#5f5f5f;border-radius:0 7px 7px 0"></div>
<div class="a" style="left:0;top:77px;width:3px;height:32px;background:#4a90f0"></div>
<!--TOOLS-->
<svg id="tl" width="48" height="711" viewBox="0 72 48 711" style="left:0;top:72px" fill="#c8c8c8" stroke="none">
<defs><linearGradient id="tg" x1="0" y1="0" x2="1" y2="0"><stop offset="0" stop-color="#c8c8c8"/><stop offset=".25" stop-color="#bdbdbd"/><stop offset="1" stop-color="#c8c8c8" stop-opacity="0.05"/></linearGradient>
<path id="cm" d="M8.500,0 Q8,6 0,6.400 L0,6.700 L8.700,6.700 Z" fill="#b9b9b9"/></defs>
<!-- move -->
<path d="M13.700,85.500 L13.700,100.300 L17.300,97 L19.800,102.800 L22.100,101.800 L19.600,96.200 L24.200,96 Z"/>
<path d="M25,100 H33 M29,96 V104" stroke="#c8c8c8" stroke-width="1.300" fill="none"/>
<!-- marquee -->
<rect x="14.600" y="123.700" width="19" height="14.600" fill="none" stroke="#c8c8c8" stroke-width="1.200" stroke-dasharray="4.200 2.800" stroke-dashoffset="2"/>
<!-- wand -->
<path d="M24.500,167 L33.200,176" stroke="#c8c8c8" stroke-width="1.500" fill="none"/>
<path d="M22,157.500 L22.900,162.200 L26.800,159.600 L24,163.200 L28.700,164.300 L24,165.200 L26.200,169 L22.600,166.300 L21.700,170.500 L20.900,166.200 L16.800,168.600 L19.800,165 L15.200,164 L19.900,163 L17.400,159.300 L21.100,162 Z"/>
<!-- crop -->
<path d="M18.300,194 V210.300 H34.200 M14,198.300 H29.800 V214.300" stroke="#c8c8c8" stroke-width="1.900" fill="none"/>
<!-- heal -->
<g transform="rotate(45 24 240.500)"><rect x="13" y="235.700" width="22" height="9.600" rx="3" fill="none" stroke="#c8c8c8" stroke-width="1.300"/><rect x="20.200" y="236.600" width="7.600" height="7.800" fill="#c8c8c8" opacity=".75"/></g>
<path d="M30.200,230.600 L31,233 L33.400,233.800 L31,234.600 L30.200,237 L29.400,234.600 L27,233.800 L29.400,233 Z"/>
<!-- brush -->
<path d="M30.300,266.500 L34,270 L28.200,277.300 L24.600,274 Z"/>
<path d="M23.500,274.800 L27.400,278.400 C27.600,283 23,286.600 15,285.800 C18,283.500 17,277 23.500,274.800 Z"/>
<!-- stamp -->
<path d="M20,303.200 H28.300 Q29.500,303.200 29.500,304.500 V309.500 Q29.500,311.500 28,313 Q27,314.500 27,316 H32 Q33.200,316 33.200,317.200 V320.600 H15 V317.200 Q15,316 16.200,316 H21.200 Q21.200,314.500 20.200,313 Q18.700,311.500 18.700,309.500 V304.500 Q18.700,303.200 20,303.200 Z"/>
<rect x="15.600" y="321.800" width="17" height="1.100"/>
<!-- eraser -->
<path d="M27.500,341 Q29,340 30.300,341.300 L33.600,345 Q34.600,346.300 33.400,347.500 L27,353.500 L20,347 Z"/>
<path d="M19.200,347.800 L16.800,350 Q15.700,351.200 16.800,352.400 L19.500,355.300 Q20.500,356.200 21.800,355.400 L26,353.800" fill="none" stroke="#c8c8c8" stroke-width="1.300"/>
<rect x="21" y="356" width="11" height="1.200"/>
<!-- gradient -->
<rect x="14" y="378.800" width="19.600" height="14.200" fill="url(#tg)"/>
<!-- drop -->
<path d="M24,412.500 C26,416.500 31,421 31,425.500 C31,429.500 28,432 24,432 C20,432 17,429.500 17,425.500 C17,421 22,416.500 24,412.500 Z"/>
<ellipse cx="21" cy="421.500" rx="1.300" ry="1.900" transform="rotate(25 21 421.500)" fill="#474747"/>
<!-- dodge -->
<circle cx="27.400" cy="454.600" r="6.500"/>
<path d="M22.500,459.500 L14.600,467.500" stroke="#c8c8c8" stroke-width="1.500" fill="none"/>
<!-- T -->
<text x="14.300" y="504.300" font-family="'Liberation Serif',serif" font-size="29.500" fill="#c8c8c8">T</text>
<!-- pen -->
<path d="M28.500,521 L34,526.500 L30,531 L24,525 Z"/>
<path d="M23.200,526 L29,531.800 L26,537 L14.500,540.600 L18,529 Z M21.400,533.600 a1.300,1.300 0 1,0 .1,0 Z" fill-rule="evenodd"/>
<path d="M15,540 L21,534" stroke="#474747" stroke-width=".9"/>
<!-- path select -->
<path d="M15.500,559.600 L15.500,573.500 L19,570.300 L21.400,576.300 L23.300,575.500 L20.900,569.600 L25.300,569.400 Z" fill="none" stroke="#c8c8c8" stroke-width="1.100"/>
<path d="M27.500,563.500 V576 M27.500,570 L33,564.500 M27.500,570 L33,574" stroke="#c8c8c8" stroke-width=".9" fill="none"/>
<rect x="26.400" y="563" width="2.200" height="2.200"/><rect x="26.400" y="574.300" width="2.200" height="2.200"/>
<!-- rect -->
<rect x="14" y="597.200" width="20" height="13.800"/>
<!-- hand -->
<path d="M22,651.300 C19.500,651 18.200,649.300 16.800,646.800 L14.900,643.300 C14.500,642.300 15.500,641.400 16.600,641.900 L19.300,644.300 V634.300 C19.300,632.900 21.400,632.900 21.400,634.300 V640 H22.100 V632.300 C22.100,630.900 24.300,630.900 24.300,632.300 V640 H25 V633 C25,631.600 27.200,631.600 27.200,633 V640.500 H27.900 V635.300 C27.900,633.900 30,633.900 30,635.300 L31.300,645 C31.300,649 29.300,651.300 26,651.300 Z"/>
<!-- zoom -->
<circle cx="20.600" cy="674.200" r="5.700" fill="none" stroke="#c8c8c8" stroke-width="1.700"/>
<path d="M25.200,678.800 L32.400,685.800" stroke="#c8c8c8" stroke-width="3" stroke-linecap="round" fill="none"/>
<!-- corner marks -->
<use href="#cm" x="34.500" y="101.800"/><use href="#cm" x="34.500" y="138.300"/><use href="#cm" x="34.500" y="174.800"/><use href="#cm" x="34.500" y="211"/>
<use href="#cm" x="34.500" y="247.300"/><use href="#cm" x="34.500" y="283.700"/><use href="#cm" x="34.500" y="356.500"/><use href="#cm" x="34.500" y="393"/>
<use href="#cm" x="34.500" y="429.300"/><use href="#cm" x="34.500" y="465.600"/><use href="#cm" x="34.500" y="502"/><use href="#cm" x="34.500" y="538.500"/>
<use href="#cm" x="34.500" y="575"/><use href="#cm" x="34.500" y="611.300"/><use href="#cm" x="34.500" y="647.800"/>
<!-- colors -->
<rect x="30" y="699.300" width="8.600" height="9" rx="1.500" fill="#000" stroke="#8a8a8a" stroke-width=".8"/>
<rect x="35.600" y="705.300" width="9" height="9.300" rx="1.500" fill="#fff"/>
<rect x="19.700" y="715.200" width="25" height="25.600" rx="4.500" fill="#fff" stroke="#151515" stroke-width="1"/>
<rect x="3" y="698.800" width="26" height="26.200" rx="4.500" fill="#000"/>
<path d="M7.300,729 V736.600 H15.500" fill="none" stroke="#b5b5b5" stroke-width="1.100"/>
<path d="M4.300,730 L7.300,725.800 L10.300,730 Z M15,733.600 L18.800,736.600 L15,739.600 Z" fill="#b5b5b5"/>
<!-- keyboard -->
<path d="M15.300,753.600 H32.700 Q34,753.600 34,754.900 V765 Q34,766.300 32.700,766.300 H15.300 Q14,766.300 14,765 V754.900 Q14,753.600 15.300,753.600 Z M16,755.700 v1.800 h1.800 v-1.800z M19.200,755.700 v1.800 h1.800 v-1.800z M22.400,755.700 v1.800 h1.800 v-1.800z M25.600,755.700 v1.800 h1.800 v-1.800z M28.800,755.700 v1.800 h1.800 v-1.800z M17.600,758.800 v1.800 h1.800 v-1.800z M20.800,758.800 v1.800 h1.800 v-1.800z M24,758.800 v1.800 h1.800 v-1.800z M27.200,758.800 v1.800 h1.800 v-1.800z M30.300,758.800 v1.800 h1.800 v-1.800z M19,762.300 v1.900 h10 v-1.900z" fill-rule="evenodd"/>
</svg>
<!--/TOOLS-->
<!--TOP-->
<svg id="tp" width="900" height="120" viewBox="0 0 900 120" style="left:0;top:0" fill="none" stroke="#c8c8c8" stroke-width="1.200">
<!-- search -->
<circle cx="510" cy="12" r="6.100" stroke-width="2"/>
<path d="M514.800,16.800 L521,23" stroke-width="3.400" stroke-linecap="round"/>
<!-- fullscreen -->
<path d="M541.200,13.200 V7 H547.500 M554,7 H560.300 V13.200 M560.300,18.200 V24.500 H554 M547.500,24.500 H541.200 V18.200" stroke-width="2.300"/>
<!-- move tool icon in options -->
<path d="M15.500,44.300 L15.500,60.500 L19.500,56.900 L22.200,63.300 L24.700,62.200 L22,56 L27,55.800 Z" fill="#c8c8c8" stroke="none"/>
<path d="M27,60.300 H35 M31,56.300 V64.300" stroke-width="1.300"/>
<!-- checkmark -->
<path d="M53,54 L56.300,57.600 L62.200,49.600" stroke="#fff" stroke-width="2"/>
<!-- select chevron -->
<path d="M206.500,50 L211.500,55.300 L216.500,50" stroke="#dcdcdc" stroke-width="1.800"/>
<!-- download -->
<path d="M469,45.200 H474.200 V52.200 H479.300 L471.600,60 L463.900,52.200 H469 Z" fill="#d2d2d2" stroke="none"/>
<rect x="463.900" y="61.200" width="15.400" height="2" fill="#d2d2d2" stroke="none"/>
<!-- align left -->
<path d="M506.300,45 V65"/>
<rect x="508.600" y="47" width="7.600" height="5.600" fill="#c8c8c8" stroke="none"/>
<rect x="509.200" y="56.200" width="12.200" height="6.200"/>
<!-- align center -->
<path d="M547,45 V65"/>
<rect x="543" y="47" width="8" height="5.600" fill="#c8c8c8" stroke="none"/>
<rect x="540.500" y="56.200" width="13" height="6.200" fill="#474747"/>
<!-- align right -->
<path d="M586.800,45 V65"/>
<rect x="577" y="47" width="7.800" height="5.600" fill="#c8c8c8" stroke="none"/>
<rect x="571.700" y="56.200" width="12.600" height="6.200"/>
<!-- distribute v -->
<path d="M604.800,45.200 V48 H611.800 V45.200 M604.800,64.800 V62 H611.800 V64.800" stroke-width="1"/>
<rect x="605.200" y="51.700" width="6.200" height="6.400" stroke-width="1"/>
<!-- align top -->
<path d="M648,45.600 H668.200"/>
<rect x="650.700" y="48" width="7" height="12.300"/>
<rect x="660.200" y="47.400" width="5.800" height="7.200" fill="#c8c8c8" stroke="none"/>
<!-- align middle -->
<path d="M679,55.200 H699" stroke="#a8a8a8"/>
<rect x="681.500" y="48.800" width="7" height="12.600" fill="#474747"/>
<rect x="691" y="51.500" width="6" height="7.400" fill="#c8c8c8" stroke="none"/>
<!-- align bottom -->
<path d="M710,64.600 H730"/>
<rect x="712.700" y="49.800" width="7" height="12.600"/>
<rect x="722.400" y="55.400" width="5.800" height="7.200" fill="#c8c8c8" stroke="none"/>
<!-- distribute h -->
<path d="M740,51.600 H743 V58.800 H740 M760,51.600 H757 V58.800 H760" stroke-width="1"/>
<rect x="747" y="51.600" width="6.400" height="7.200" stroke-width="1"/>
<!-- dots -->
<text x="774.6" y="59" font-family="'Liberation Sans',sans-serif" font-size="16" fill="#dcdcdc" stroke="none" letter-spacing=".3">...</text>
<!-- grid -->
<path d="M822.300,46.300 H840 V64 H822.300 Z M831.100,46.300 V64 M822.300,55.100 H840" stroke-width="2.100"/>
<!-- tab close -->
<path d="M220,87.800 L231.200,99 M231.200,87.800 L220,99" stroke="#dcdcdc" stroke-width="1.900"/>
</svg>
<!--/TOP-->
<!-- RIGHT ICON COLUMN -->
<div class="a" style="left:1531px;top:86px;width:49px;height:697px;background:#474747"></div>
<div class="a" style="left:1531px;top:160px;width:49px;height:5px;background:#252525"></div>
<div class="a" style="left:1531px;top:205px;width:49px;height:5px;background:#252525"></div>
<div class="a" style="left:1531px;top:285px;width:49px;height:5px;background:#252525"></div>
<div class="a" style="left:1531px;top:366px;width:49px;height:5px;background:#252525"></div>
<div class="t" style="left:1548px;top:69px;font-size:11px;font-weight:bold;color:#fff;letter-spacing:1px">&lt;&gt;</div>
<div class="t" style="left:1745px;top:69px;font-size:11px;font-weight:bold;color:#fff;letter-spacing:1px">&gt;&lt;</div>
<!-- HISTORY PANEL -->
<div class="ptab" style="left:1585px;top:86px;width:83px">历史记录</div>
<div class="pt2" style="left:1682px;top:86px">色板</div>
<div class="a" style="left:1891px;top:86px;width:23.500px;height:29px;background:#474747;border-radius:5px"></div>
<div class="a" style="left:1585px;top:118px;width:330px;height:200px;background:#474747"></div>
<div class="a" style="left:1907px;top:118px;width:8px;height:200px;background:#363636"></div>
<div class="hrow" style="top:118px">打开</div>
<div class="hrow" style="top:153px">停用图层效果</div>
<div class="hrow" style="top:188px">启用图层效果</div>
<div class="hrow" style="top:223px;background:#3e3e3e">移动</div>
<!-- LAYERS PANEL -->
<div class="ptab" style="left:1585px;top:323px;width:50px;height:33px">图层</div>
<div class="pt2" style="left:1649px;top:323px">通道</div>
<div class="pt2" style="left:1704px;top:323px">路径</div>
<div class="a" style="left:1891px;top:323px;width:23.500px;height:29.500px;background:#474747;border-radius:5px"></div>
<div class="a" style="left:1585px;top:356px;width:330px;height:427px;background:#474747"></div>
<div class="a dk" style="left:1588px;top:361px;width:97px;height:31px"></div>
<div class="t" style="left:1596px;top:368px">正常</div>
<div class="t" style="left:1692px;top:368px;font-size:16.2px">不透明度:</div>
<div class="a dk" style="left:1764px;top:361px;width:53px;height:31px"></div>
<div class="t" style="left:1769px;top:368px;letter-spacing:.1px">100%</div>
<div class="t" style="left:1588px;top:404px">锁定:</div>
<div class="t" style="left:1719px;top:404px">填充:</div>
<div class="a dk" style="left:1758px;top:397px;width:53px;height:31px"></div>
<div class="t" style="left:1763px;top:404px;letter-spacing:.1px">100%</div>
<div class="a" style="left:1585px;top:434px;width:330px;height:2px;background:#2a2a2a"></div>
<div class="a" style="left:1907px;top:436px;width:8px;height:309px;background:#363636"></div>
<div class="lrow" style="top:436px;background:#5e5e5e"><div class="a" style="left:35px;top:0;width:38px;height:51px;background:#4c4c4c"></div><div class="a" style="left:37px;top:1px;width:34px;height:46px;box-sizing:border-box;border:2px dashed #e8e8e8"></div><div class="th" style="top:3px"><div class="mk" style="left:4px;top:23px;width:5px;height:3px;background:#e8902a"></div><div class="so"></div></div><span class="nm">2</span></div>
<div class="lrow" style="top:488px"><div class="th"><div class="mk" style="left:21px;top:17px;width:3px;height:3px;background:#b0601a"></div></div><span class="nm">33</span></div>
<div class="lrow" style="top:540px"><div class="ck"></div><div class="th"><div class="mk" style="left:18px;top:23px;width:3px;height:2px;background:#e03030"></div><div class="so"></div></div><span class="nm">render_4803</span></div>
<div class="lrow" style="top:592px"><div class="ck"></div><div class="th"><div class="mk" style="left:12px;top:23px;width:4px;height:4px;background:#5a4030"></div><div class="so"></div></div><span class="nm">render_4787</span></div>
<div class="lrow" style="top:645px"><div class="ck"></div><div class="th"><div class="mk" style="left:6px;top:22px;width:5px;height:3px;background:#2a7a6a"></div><div class="so"></div></div><span class="nm">render_4719</span></div>
<div class="lrow" style="top:697px;height:48px;border-bottom:none;overflow:hidden"><div class="ck"></div><div class="th"><div class="mk" style="left:23px;top:22px;width:5px;height:3px;background:#e07a20"></div><div class="so"></div></div><span class="nm">render_1042</span></div>
<div class="a" style="left:1585px;top:745px;width:330px;height:1px;background:#2e2e2e"></div>
<!--RIGHT-->
<svg id="rt" width="384" height="711" viewBox="1531 72 384 711" style="left:1531px;top:72px" fill="none" stroke="#c8c8c8" stroke-width="1.200">
<defs><path id="cm2" d="M5,0 V5 H0" fill="none" stroke="#c8c8c8" stroke-width="1.300"/></defs>
<!-- info -->
<circle cx="1553.800" cy="105.900" r="9" stroke-width="1.800"/>
<rect x="1553" y="103.800" width="1.700" height="7.200" fill="#c8c8c8" stroke="none"/><rect x="1553" y="100.300" width="1.700" height="1.900" fill="#c8c8c8" stroke="none"/>
<!-- sliders -->
<path d="M1544,135.200 H1549.500 M1552.500,135.200 H1564 M1544,141.400 H1558.500 M1561.500,141.400 H1564 M1544,147.600 H1552.500 M1555.500,147.600 H1564" stroke-width="1.700"/>
<path d="M1551,132.800 V137.600 M1560,139 V143.800 M1554,145.200 V150" stroke-width="1.700"/>
<!-- brush settings -->
<path d="M1560.500,175 L1564.300,178.700 L1558.300,186 L1554.700,182.600 Z" fill="#c8c8c8" stroke="none"/>
<path d="M1553.600,183.400 L1557.500,187 C1557.700,191.800 1553,195.400 1545,194.600 C1548,192.300 1547,185.600 1553.600,183.400 Z" fill="#c8c8c8" stroke="none"/>
<path d="M1544,176.300 H1552 M1544,179 H1552 M1544,181.700 H1550" stroke-width="1" stroke="#b0b0b0"/>
<path d="M1547,175 V178 M1550,177.700 V180.500 M1546.500,180.500 V183" stroke-width="1" stroke="#b0b0b0"/>
<!-- Tt -->
<text transform="translate(1546.800,239.600) scale(.770,1)" font-family="'Liberation Serif',serif" font-size="29" fill="#c8c8c8" stroke="none" letter-spacing="-2.500">Tt</text>
<!-- pilcrow -->
<text transform="translate(1542.600,274.300) scale(1.350,1)" font-family="'Liberation Sans',sans-serif" font-weight="bold" font-size="24.500" fill="#c8c8c8" stroke="none">¶</text>
<!-- css -->
<text x="1543.600" y="314.300" font-family="'Liberation Mono','Liberation Sans',monospace" font-weight="bold" font-size="12.200" fill="#c8c8c8" stroke="none" textLength="20.800" lengthAdjust="spacingAndGlyphs">CSS</text>
<!-- image -->
<rect x="1544.600" y="337.600" width="19" height="14.600" rx="1" stroke-width="1.200"/>
<path d="M1545.200,351.600 V348.500 L1551.500,342.800 L1556,347 L1558.300,345.200 L1563,349 V351.600 Z" fill="#c8c8c8" stroke="none"/>
<circle cx="1558.800" cy="341.800" r="1.900" fill="#c8c8c8" stroke="none"/>
<!-- panel menu buttons -->
<path d="M1898.800,98.500 H1907.300 M1898.800,101.600 H1907.300 M1898.800,104.700 H1907.300" stroke="#f2f2f2" stroke-width="1.200"/>
<path d="M1898.800,336.600 H1907.300 M1898.800,339.700 H1907.300 M1898.800,342.800 H1907.300" stroke="#f2f2f2" stroke-width="1.200"/>
<!-- scroll arrows -->
<path d="M1909.600,128 L1913.800,121.800 L1918,128 Z M1909.600,309 L1913.800,315.200 L1918,309 Z M1909.600,446 L1913.800,439.800 L1918,446 Z M1909.600,733.300 L1913.800,739.500 L1918,733.300 Z" fill="#141414" stroke="none"/>
<!-- select chevron / triangles -->
<path d="M1668.800,374 L1674,379.600 L1679.200,374" stroke="#dcdcdc" stroke-width="1.800"/>
<path d="M1819.600,372 H1832.200 L1825.900,383.200 Z" fill="#dcdcdc" stroke="none"/>
<path d="M1813.500,408 H1826.100 L1819.800,419.200 Z" fill="#dcdcdc" stroke="none"/>
<!-- lock icons -->
<g fill="#c8c8c8" stroke="none">
<path d="M1634,407 H1648.300 V421.200 H1634 Z M1635.200,408.200 V420 H1647.100 V408.200 Z" fill-rule="evenodd"/>
<rect x="1635.200" y="408.200" width="4" height="4"/><rect x="1643.100" y="408.200" width="4" height="4"/><rect x="1639.200" y="412.200" width="3.900" height="3.900"/><rect x="1635.200" y="416.100" width="4" height="3.900"/><rect x="1643.100" y="416.100" width="4" height="3.900"/>
<path d="M1666,407 L1669,409.900 L1664.400,415.200 L1661.800,412.600 Z"/>
<path d="M1661,413.200 L1663.800,416 C1664,419.500 1660.500,422 1654.800,421.500 C1657,420 1656.300,414.800 1661,413.200 Z"/>
<path d="M1681.500,406.500 L1684.100,409.600 H1682.100 V413.600 H1686.100 V411.600 L1689.200,414.200 L1686.100,416.800 V414.800 H1682.100 V418.800 H1684.100 L1681.500,421.900 L1678.900,418.800 H1680.900 V414.800 H1676.900 V416.800 L1673.800,414.200 L1676.900,411.600 V413.600 H1680.900 V409.600 H1678.900 Z"/>
<rect x="1695" y="413" width="13.300" height="8.700" rx="1"/>
</g>
<path d="M1697.800,413.200 V411 A3.850,3.850 0 0 1 1705.500,411 V413.200" stroke-width="1.900"/>
<!-- eyes -->
<g id="eye"><path d="M1595,461.500 C1598,457 1600.500,455.800 1602.500,455.800 C1604.500,455.800 1607,457 1610,461.500 C1607,466 1604.500,467.200 1602.500,467.200 C1600.500,467.200 1598,466 1595,461.500 Z" stroke="#b4b4b4" stroke-width="1.300"/><circle cx="1602.500" cy="461.300" r="2.900" fill="#b4b4b4" stroke="none"/><circle cx="1603.300" cy="460" r="1" fill="#5a5a5a" stroke="none"/></g>
<use href="#eye" y="52.300"/>
<!-- bottom icons -->
<g stroke="#c8c8c8" stroke-width="1.900"><rect x="1728.600" y="760.700" width="7.200" height="5.800" rx="2.700"/><rect x="1735.200" y="760.700" width="7.200" height="5.800" rx="2.700"/></g>
<path d="M1732.500,763.600 H1738.500" stroke-width="1.900"/>
<text x="1754.200" y="769.300" font-family="'Liberation Sans',sans-serif" font-size="16" fill="#c8c8c8" stroke="none" letter-spacing="-.900">eff</text>
<use href="#cm2" x="1768" y="770"/>
<path d="M1783,758 H1798.200 V769 H1783 Z M1794.300,763.500 a3.700,3.700 0 1,0 -7.400,0 a3.700,3.700 0 1,0 7.400,0 Z" fill="#c8c8c8" fill-rule="evenodd" stroke="none"/>
<circle cx="1817.600" cy="763.500" r="7" stroke-width="1.100"/>
<path d="M1817.600,756.500 A7,7 0 0 0 1817.600,770.500 Z" fill="#c8c8c8" stroke="none"/>
<use href="#cm2" x="1822.700" y="770"/>
<path d="M1838,759.200 Q1838,758 1839.200,758 H1843.800 L1845.600,759.900 H1851.800 Q1853,759.900 1853,761.100 V767.800 Q1853,769 1851.800,769 H1839.200 Q1838,769 1838,767.800 Z" fill="#c8c8c8" stroke="none"/>
<path d="M1865.500,756.500 H1879.800 V770.500 H1870.500 L1865.500,765.500 Z M1865.500,765.500 H1870.500 V770.500" stroke-width="1.100"/>
<path d="M1893,758 L1895,769.300 Q1895.300,771 1897,771 H1904 Q1905.700,771 1906,769.300 L1908,758 Z" fill="#c8c8c8" stroke="none"/>
<ellipse cx="1900.500" cy="758" rx="7.500" ry="2.200" fill="#c8c8c8" stroke="none"/><ellipse cx="1900.500" cy="758" rx="5.900" ry="1.200" fill="#777" stroke="none"/>
</svg>
<!--/RIGHT-->
<!-- FOOTER -->
<div class="a" id="footer">
<span style="left:30px;color:#c4c4c4">反馈我们</span><span style="left:115px;color:#c4c4c4">关于我们</span><span style="left:200px;color:#c4c4c4">设计师接单</span><span style="left:300px;color:#c4c4c4">友情链接</span>
<span class="g" id="f1" style="left:408px">闽ICP备18003982号-2</span><span class="g" style="left:558.500px">｜</span>
<span class="g" id="f2" style="left:577px">©2017 - 2022 稿定（厦门）科技有限公司</span><span class="g" style="left:853.700px">｜</span>
<svg width="19" height="19" viewBox="0 0 19 19" style="left:872px;top:9.500px"><path d="M9.500,0.800 C12,2.300 14.500,2.600 17,2.400 C17.500,8 16,14 9.500,18 C3,14 1.500,8 2,2.400 C4.500,2.600 7,2.300 9.500,0.800 Z" fill="#e9c988"/><circle cx="9.500" cy="8" r="5.200" fill="#2d4d9a"/><circle cx="9.500" cy="8" r="3.500" fill="#d8402c"/><circle cx="9.500" cy="8" r="1.500" fill="#f2d27a"/><path d="M4.500,14 Q9.500,17.500 14.500,14 L13.500,16 Q9.500,18.500 5.500,16 Z" fill="#f4e2b0"/></svg>
<span class="g" id="f3" style="left:894px">互联网安全备案号:35020602001758</span>
</div>
</body>
</html>
